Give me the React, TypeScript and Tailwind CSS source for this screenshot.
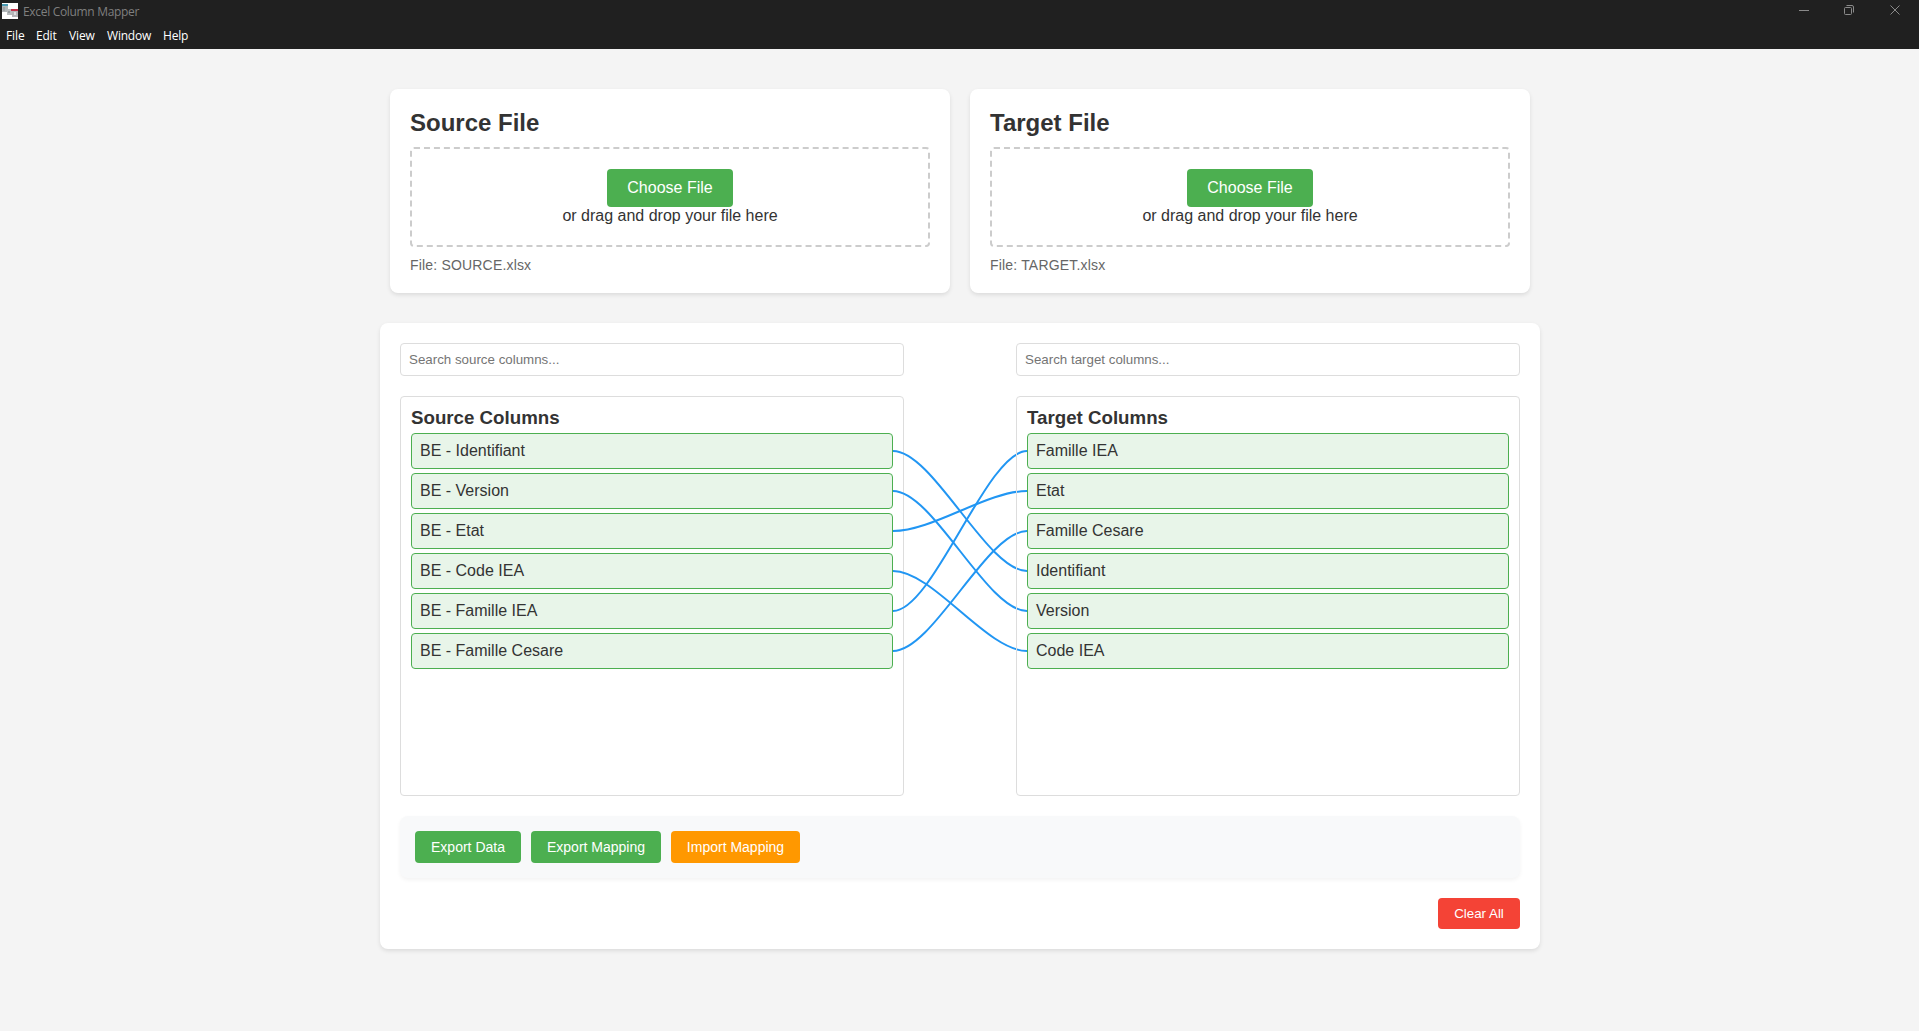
const SOURCE_COLUMNS = [
  'BE - Identifiant',
  'BE - Version',
  'BE - Etat',
  'BE - Code IEA',
  'BE - Famille IEA',
  'BE - Famille Cesare',
];
const TARGET_COLUMNS = ['Famille IEA', 'Etat', 'Famille Cesare', 'Identifiant', 'Version', 'Code IEA'];

// Pairs of [source row, target row].
const LINKS = [[0, 3], [1, 4], [2, 1], [3, 5], [4, 0], [5, 2]];

const MENU = [
  { label: 'File', box: 'w-[30px]', text: 'tracking-[-0.1px]' },
  { label: 'Edit', box: 'w-[33px]', text: 'tracking-[-0.2px]' },
  { label: 'View', box: 'w-[38px]', text: 'tracking-[-0.1px]' },
  { label: 'Window', box: 'w-[56px]', text: 'tracking-[-0.2px]' },
  { label: 'Help', box: 'w-[30px]', text: 'tracking-[-0.2px]' },
];

function AppIcon() {
  return (
    <svg width="16" height="16" viewBox="0 0 16 16" shapeRendering="crispEdges">
      <rect width="16" height="16" fill="#fff" />
      <rect x="0" y="1" width="6" height="2" fill="#4b9cb5" />
      <rect x="0" y="3" width="6" height="6" fill="#b3b8ba" />
      <rect x="1" y="4" width="2" height="4" fill="#9fa4a7" />
      <rect x="5" y="6" width="5" height="6" fill="#b9bcbe" />
      <rect x="6" y="8" width="2" height="2" fill="#989da0" />
      <rect x="9" y="6" width="7" height="2" fill="#c22f48" />
      <rect x="10" y="8" width="6" height="6" fill="#b5b5b8" />
      <rect x="12" y="9" width="2" height="3" fill="#dedee0" />
    </svg>
  );
}

function TitleBar() {
  return (
    <header className="h-[49px] bg-[#202020] font-['Open_Sans',sans-serif] text-[12px]">
      <div className="flex h-[22px] items-center justify-between">
        <div className="flex items-center pl-[2px] text-[#7f7f7f]">
          <AppIcon />
          <span className="ml-[5px] mt-[2px] leading-[16px] tracking-[-0.32px]">Excel Column Mapper</span>
        </div>
        <svg className="mr-[19px]" width="101" height="22" viewBox="0 0 101 22" fill="none" stroke="#8a8a8a">
          <path d="M0 10.5H10" />
          <rect x="45.5" y="7.5" width="7" height="7" rx="1" />
          <path d="M47.5 5.5H53a1.5 1.5 0 0 1 1.5 1.5V12.5" />
          <path d="M91.5 5.5L100.500 14.500M100.500 5.500L91.500 14.500" />
        </svg>
      </div>
      <nav className="flex pl-[6px] pt-[5px] leading-[18px] text-white">
        {MENU.map((m) => (
          <div key={m.label} className={m.box}>
            <span className={m.text}>{m.label}</span>
          </div>
        ))}
      </nav>
    </header>
  );
}

function FileCard({ title, file }: { title: string; file: string }) {
  return (
    <section className="w-[560px] rounded-lg bg-white p-5 shadow-[0_2px_4px_rgba(0,0,0,0.1)]">
      <h2 className="mb-[10px] h-[28px] text-[24px] font-bold leading-[28px]">{title}</h2>
      <div className="flex h-[100px] flex-col items-center rounded border-2 border-dashed border-[#ccc] pt-5">
        <button className="h-[38px] w-[126px] rounded bg-[#4caf50] text-[16px] leading-[18px] text-white">
          Choose File
        </button>
        <p className="text-[16px] leading-[18px]">or drag and drop your file here</p>
      </div>
      <p className="mt-[10px] text-[14px] leading-[16px] tracking-[0.18px] text-[#666]">File: {file}</p>
    </section>
  );
}

function SearchBox({ placeholder }: { placeholder: string }) {
  return (
    <input
      className="h-[33px] w-[504px] rounded border border-[#ddd] bg-white px-2 text-[13.333px] placeholder:text-[#757575]"
      placeholder={placeholder}
    />
  );
}

function ColumnList({ title, items }: { title: string; items: string[] }) {
  return (
    <div className="h-[400px] w-[504px] rounded border border-[#ddd] p-[10px]">
      <h3 className="mb-[5px] h-[21px] text-[18.72px] font-bold leading-[21px]">{title}</h3>
      <ul className="flex flex-col gap-1">
        {items.map((item) => (
          <li
            key={item}
            className="h-9 rounded border border-[#4caf50] bg-[#e8f5e9] p-2 text-[16px] leading-[18px]"
          >
            {item}
          </li>
        ))}
      </ul>
    </div>
  );
}

function Connections() {
  const y = (row: number) => 55 + row * 40;
  return (
    <svg className="absolute left-[493px] top-0" width="134" height="400" viewBox="0 0 134 400" fill="none">
      {LINKS.map(([s, t]) => (
        <path
          key={s}
          d={`M0 ${y(s)}C40 ${y(s)} 94 ${y(t)} 134 ${y(t)}`}
          stroke="#2196f3"
          strokeWidth="2"
        />
      ))}
      <path d="M123.500 4V396" stroke="#ddd" />
    </svg>
  );
}

export default function App() {
  return (
    <div className="min-h-[1031px] bg-[#f4f4f4] font-['Liberation_Sans',Arial,sans-serif] text-[#333]">
      <TitleBar />
      <main className="ml-[380px] w-[1160px] pt-10">
        <div className="flex gap-5 px-[10px]">
          <FileCard title="Source File" file="SOURCE.xlsx" />
          <FileCard title="Target File" file="TARGET.xlsx" />
        </div>

        <section className="mt-[30px] flex flex-col gap-5 rounded-lg bg-white p-5 shadow-[0_2px_4px_rgba(0,0,0,0.1)]">
          <div className="flex justify-between">
            <SearchBox placeholder="Search source columns..." />
            <SearchBox placeholder="Search target columns..." />
          </div>

          <div className="relative flex justify-between">
            <ColumnList title="Source Columns" items={SOURCE_COLUMNS} />
            <ColumnList title="Target Columns" items={TARGET_COLUMNS} />
            <Connections />
          </div>

          <div className="flex h-[62px] gap-[10px] rounded-lg bg-[#f8f9fa] p-[15px] text-[14px] text-white shadow-[0_2px_4px_rgba(0,0,0,0.05)]">
            <button className="h-8 w-[106px] rounded bg-[#4caf50]">Export Data</button>
            <button className="h-8 w-[130px] rounded bg-[#4caf50]">Export Mapping</button>
            <button className="h-8 w-[129px] rounded bg-[#ff9800]">Import Mapping</button>
          </div>

          <button className="h-[31px] w-[82px] self-end rounded bg-[#f44336] text-[13.333px] text-white">
            Clear All
          </button>
        </section>
      </main>
    </div>
  );
}
